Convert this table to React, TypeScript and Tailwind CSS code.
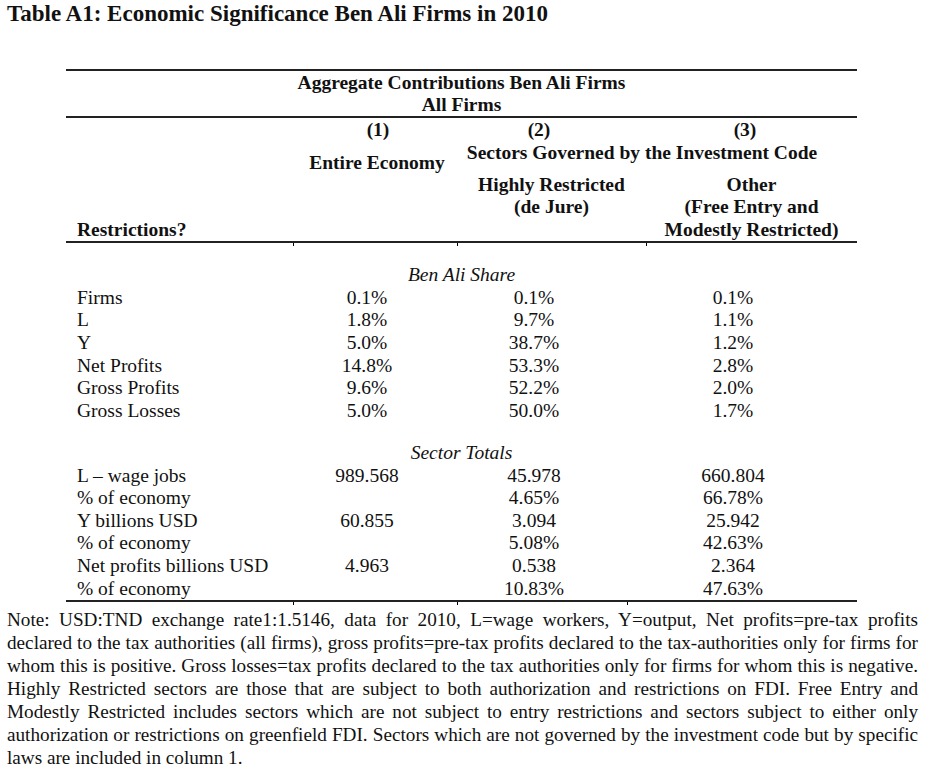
import React from "react";

const serif = "font-['Liberation_Serif','Times_New_Roman',serif]";

function Ticks({ cols }: { cols: string }) {
  return (
    <div className={`grid h-[3px] ${cols}`}>
      <div />
      <div className="border-l border-black" />
      <div className="border-l border-black" />
      <div className="border-l border-black" />
    </div>
  );
}

const shareRows: [string, string, string, string][] = [
  ["Firms", "0.1%", "0.1%", "0.1%"],
  ["L", "1.8%", "9.7%", "1.1%"],
  ["Y", "5.0%", "38.7%", "1.2%"],
  ["Net Profits", "14.8%", "53.3%", "2.8%"],
  ["Gross Profits", "9.6%", "52.2%", "2.0%"],
  ["Gross Losses", "5.0%", "50.0%", "1.7%"],
];

const totalRows: [string, string, string, string][] = [
  ["L \u2013 wage jobs", "989.568", "45.978", "660.804"],
  ["% of economy", "", "4.65%", "66.78%"],
  ["Y billions USD", "60.855", "3.094", "25.942"],
  ["% of economy", "", "5.08%", "42.63%"],
  ["Net profits billions USD", "4.963", "0.538", "2.364"],
  ["% of economy", "", "10.83%", "47.63%"],
];

function DataRow({ r }: { r: [string, string, string, string] }) {
  return (
    <div className="grid grid-cols-[227px_164px_170px_230px]">
      <div className="pl-[11px] whitespace-nowrap">{r[0]}</div>
      <div className="pr-[16px] text-center">{r[1]}</div>
      <div className="pr-[16px] text-center">{r[2]}</div>
      <div className="pr-[18px] text-center">{r[3]}</div>
    </div>
  );
}

const noteLines = [
  "Note: USD:TND exchange rate1:1.5146, data for 2010, L=wage workers, Y=output, Net profits=pre-tax profits",
  "declared to the tax authorities (all firms), gross profits=pre-tax profits declared to the tax-authorities only for firms for",
  "whom this is positive. Gross losses=tax profits declared to the tax authorities only for firms for whom this is negative.",
  "Highly Restricted sectors are those that are subject to both authorization and restrictions on FDI. Free Entry and",
  "Modestly Restricted includes sectors which are not subject to entry restrictions and sectors subject to either only",
  "authorization or restrictions on greenfield FDI. Sectors which are not governed by the investment code but by specific",
];

export default function App() {
  return (
    <div className={`w-[943px] h-[772px] overflow-hidden bg-white text-[#111] ${serif}`}>
      <div className="pl-[7px] text-[23px] font-bold leading-[28px] whitespace-nowrap">
        Table A1: Economic Significance Ben Ali Firms in 2010
      </div>

      <div className="ml-[66px] mt-[41px] w-[791px] text-[19.5px]">
        <div className="h-[2px] bg-[#222]" />
        <div className="pt-[1px] text-center font-bold leading-[22px]">
          <div>Aggregate Contributions Ben Ali Firms</div>
          <div>All Firms</div>
        </div>
        <div className="h-[2px] bg-[#222]" />

        <div className="grid grid-cols-[227px_164px_400px] pt-[1px] font-bold leading-[22.6px]">
          <div className="flex flex-col justify-end pl-[11px]">Restrictions?</div>
          <div className="flex flex-col">
            <div className="pl-[6px] text-center">(1)</div>
            <div className="mt-[10px] pl-[4px] text-center whitespace-nowrap">Entire Economy</div>
          </div>
          <div className="flex flex-col">
            <div className="grid grid-cols-[189px_211px] text-center">
              <div className="pr-[25px]">(2)</div>
              <div className="pr-[13px]">(3)</div>
            </div>
            <div className="pr-[30px] text-center whitespace-nowrap">
              Sectors Governed by the Investment Code
            </div>
            <div className="mt-[9.5px] grid grid-cols-[189px_211px] text-center whitespace-nowrap">
              <div>
                <div>Highly Restricted</div>
                <div>(de Jure)</div>
              </div>
              <div>
                <div>Other</div>
                <div>(Free Entry and</div>
                <div>Modestly Restricted)</div>
              </div>
            </div>
          </div>
        </div>
        <div className="h-[2px] bg-[#222]" />
        <Ticks cols="grid-cols-[227px_164px_189px_211px]" />

        <div className="leading-[22.6px]">
          <div className="mt-[17.7px] text-center italic">Ben Ali Share</div>
          {shareRows.map((r, i) => (
            <DataRow key={i} r={r} />
          ))}
          <div className="mt-[19.8px] text-center italic">Sector Totals</div>
          {totalRows.map((r, i) => (
            <DataRow key={i} r={r} />
          ))}
        </div>
        <div className="h-[2px] bg-[#222]" />
        <Ticks cols="grid-cols-[227px_164px_170px_230px]" />
      </div>

      <div className="mt-[2.5px] w-[911px] ml-[7px] text-[19.2px] leading-[23px]">
        {noteLines.map((l, i) => (
          <div key={i} className="whitespace-nowrap text-justify [text-align-last:justify]">
            {l}
          </div>
        ))}
        <div className="whitespace-nowrap">laws are included in column 1.</div>
      </div>
    </div>
  );
}
